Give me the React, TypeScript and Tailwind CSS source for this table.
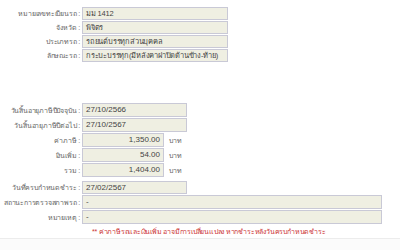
const FONT = "font-['Liberation_Sans','DejaVu_Sans',sans-serif]";

type RowProps = {
  label: string;
  value: string;
  box: string;
  align?: "left" | "right";
  unit?: string;
  h?: string;
  thai?: boolean;
};

function Row({ label, value, box, align = "left", unit, h = "h-[13px]", thai }: RowProps) {
  return (
    <div className={`flex items-center ${h}`}>
      <div className="w-[82px] shrink-0 whitespace-nowrap pr-[2px] text-right text-[7px] tracking-[-0.2px] text-[#666]">
        {label} :
      </div>
      <div
        className={`${box} ${h} flex items-center overflow-hidden whitespace-nowrap border border-[#c9c9d6] bg-[#efefe2] px-[3px] text-[#444] ${
          thai ? "text-[7.5px] tracking-[-0.2px]" : "text-[8px]"
        } ${align === "right" ? "justify-end" : ""}`}
      >
        {value}
      </div>
      {unit && <span className="ml-[5px] text-[7px] text-[#666]">{unit}</span>}
    </div>
  );
}

export default function App() {
  return (
    <div className={`relative h-[250px] w-[400px] overflow-hidden bg-white leading-none ${FONT}`}>
      {/* vehicle details */}
      <div className="flex flex-col gap-px pt-[7px]">
        <Row label="หมายเลขทะเบียนรถ" value="มม 1412" box="w-[146px]" thai />
        <Row label="จังหวัด" value="พิจิตร" box="w-[146px]" thai />
        <Row label="ประเภทรถ" value="รถยนต์บรรทุกส่วนบุคคล" box="w-[146px]" thai />
        <Row label="ลักษณะรถ" value="กระบะบรรทุก(มีหลังคาฝาปิดด้านข้าง-ท้าย)" box="w-[146px]" thai />
      </div>

      {/* tax details */}
      <div className="mt-[41px] flex flex-col gap-px">
        <Row label="วันสิ้นอายุภาษีปีปัจจุบัน" value="27/10/2566" box="w-[105px]" h="h-[14px]" />
        <Row label="วันสิ้นอายุภาษีปีต่อไป" value="27/10/2567" box="w-[105px]" h="h-[14px]" />
        <Row label="ค่าภาษี" value="1,350.00" box="w-[82px]" align="right" unit="บาท" h="h-[14px]" />
        <Row label="เงินเพิ่ม" value="54.00" box="w-[82px]" align="right" unit="บาท" h="h-[14px]" />
        <Row label="รวม" value="1,404.00" box="w-[82px]" align="right" unit="บาท" h="h-[14px]" />
        <div className="mt-[3px]">
          <Row label="วันที่ครบกำหนดชำระ" value="27/02/2567" box="w-[105px]" h="h-[13px]" />
        </div>
        <Row label="สถานะการตรวจสภาพรถ" value="-" box="w-[300px]" h="h-[14px]" />
        <Row label="หมายเหตุ" value="-" box="w-[300px]" h="h-[14px]" />
      </div>

      <p className="mt-[4px] pl-[92px] text-[7px] tracking-[-0.2px] text-[#cc3333]">
        ** ค่าภาษีรถและเงินเพิ่ม อาจมีการเปลี่ยนแปลง หากชำระหลังวันครบกำหนดชำระ
      </p>

      <div className="absolute inset-x-0 bottom-0 h-[12px] border-t border-[#ececec] bg-[#fbfbfb]" />
    </div>
  );
}
